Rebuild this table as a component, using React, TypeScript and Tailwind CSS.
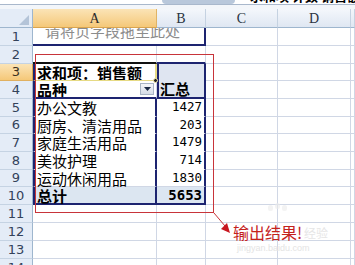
import React from "react";

const cjk = { fontFamily: '"Noto Sans CJK SC", "Liberation Sans", sans-serif' };
const mono = { fontFamily: '"DejaVu Sans Mono", "Liberation Mono", monospace' };

const rows = [
  { n: 1, h: "h-[18px]" },
  { n: 2, h: "h-[18px]" },
  { n: 3, h: "h-[17px]" },
  { n: 4, h: "h-[18px]" },
  { n: 5, h: "h-[18px]" },
  { n: 6, h: "h-[17px]" },
  { n: 7, h: "h-[18px]" },
  { n: 8, h: "h-[18px]" },
  { n: 9, h: "h-[17px]" },
  { n: 10, h: "h-[18px]" },
  { n: 11, h: "h-[18px]" },
  { n: 12, h: "h-[18px]" },
  { n: 13, h: "h-[18px]" },
  { n: 14, h: "h-[18px]" },
];

const data: Record<number, [string, string]> = {
  5: ["办公文教", "1427"],
  6: ["厨房、清洁用品", "203"],
  7: ["家庭生活用品", "1479"],
  8: ["美妆护理", "714"],
  9: ["运动休闲用品", "1830"],
};

const grid = "border-r border-b border-[#d0d7e5]";

const RowHead = ({ n }: { n: number }) => (
  <div
    className={
      "w-[33px] shrink-0 flex items-center justify-center border-r border-b text-[13px] " +
      (n === 3
        ? "bg-gradient-to-b from-[#fbe4b6] to-[#f5c878] border-r-[#d9a550] border-b-[#e0b060] text-[#3a3020]"
        : "bg-[#e4ecf7] border-r-[#9eb6ce] border-b-[#c5d3e3] text-[#33425a]")
    }
    style={{ fontFamily: '"DejaVu Sans", sans-serif' }}
  >
    {n}
  </div>
);

const CellsAB = ({ n }: { n: number }) => {
  if (n === 1) {
    return (
      <div className="w-[173px] shrink-0 overflow-hidden border-b-2 border-r-2 border-[#1d2470] bg-white">
        <div className="pl-[12px] -mt-[7px] text-[15px] leading-[20px] text-[#8c8c8c] whitespace-nowrap" style={cjk}>
          请将页字段拖至此处
        </div>
      </div>
    );
  }
  if (n === 2) {
    return (
      <>
        <div className="w-[124px] shrink-0 border-r border-b-2 border-r-[#d0d7e5] border-b-[#111111]" />
        <div className="w-[49px] shrink-0 border-r border-b-2 border-r-[#d0d7e5] border-b-[#1d2470]" />
      </>
    );
  }
  if (n === 3) {
    return (
      <>
        <div className="w-[124px] shrink-0 bg-white border-l-2 border-r-2 border-b border-l-[#1d2470] border-r-[#e6da84] border-b-[#e6da84] flex items-center pl-[2px] overflow-hidden">
          <span className="text-[15px] font-bold text-black whitespace-nowrap leading-none" style={cjk}>
            求和项：销售额
          </span>
        </div>
        <div className="w-[49px] shrink-0 bg-[#dfe5f1] border-l-2 border-r-2 border-[#1d2470]" />
      </>
    );
  }
  if (n === 4) {
    return (
      <>
        <div className="w-[124px] shrink-0 bg-white border-l-2 border-b-2 border-r border-l-[#1d2470] border-b-[#1d2470] border-r-[#d0d7e5] flex items-center pl-[2px] pr-[2px] overflow-hidden">
          <span className="text-[15px] font-bold text-black leading-none" style={cjk}>
            品种
          </span>
          <div className="ml-auto w-[14px] h-[12px] border border-[#a8b4c4] bg-gradient-to-b from-[#f4f6f9] to-[#d6dde7] flex items-center justify-center">
            <svg width="7" height="4" viewBox="0 0 7 4">
              <polygon points="0,0 7,0 3.5,4" fill="#1b2a44" />
            </svg>
          </div>
        </div>
        <div className="w-[49px] shrink-0 bg-[#dfe5f1] border-l-2 border-r-2 border-b-2 border-[#1d2470] flex items-end pl-[1px] overflow-hidden">
          <span className="text-[15px] font-bold text-black leading-[16px]" style={cjk}>
            汇总
          </span>
        </div>
      </>
    );
  }
  if (n >= 5 && n <= 9) {
    const [label, val] = data[n];
    return (
      <>
        <div
          className={
            "w-[124px] shrink-0 bg-white border-l-2 border-r-2 border-b border-l-[#1d2470] border-r-[#1d2470] flex items-center pl-[2px] " +
            (n === 9 ? "border-b-[#d0d7e5]" : "border-b-white")
          }
        >
          <span className="text-[15px] text-black leading-none whitespace-nowrap" style={cjk}>
            {label}
          </span>
        </div>
        <div
          className={
            "w-[49px] shrink-0 bg-white border-r-2 border-b border-r-[#1d2470] flex items-center justify-end pr-[2px] " +
            (n === 9 ? "border-b-[#d0d7e5]" : "border-b-white")
          }
        >
          <span className="text-[12.5px] text-black leading-none" style={mono}>
            {val}
          </span>
        </div>
      </>
    );
  }
  if (n === 10) {
    return (
      <>
        <div className="w-[124px] shrink-0 bg-[#dce6f1] border-l-2 border-r-2 border-b-2 border-[#1d2470] flex items-center pl-[2px]">
          <span className="text-[15px] font-bold text-black leading-none" style={cjk}>
            总计
          </span>
        </div>
        <div className="w-[49px] shrink-0 bg-[#dce6f1] border-r-2 border-b-2 border-[#1d2470] flex items-center justify-end pr-[2px]">
          <span className="text-[14px] font-bold text-black leading-none" style={mono}>
            5653
          </span>
        </div>
      </>
    );
  }
  return (
    <>
      <div className={"w-[124px] shrink-0 " + grid} />
      <div className={"w-[49px] shrink-0 " + grid} />
    </>
  );
};

export default function App() {
  return (
    <div className="relative w-[355px] h-[265px] overflow-hidden bg-white">
      {/* formula bar remnant */}
      <div className="h-[9px] flex flex-col">
        <div className="relative h-[4px] bg-white overflow-hidden">
          <div className="absolute left-[162px] top-0 w-[73px] h-[4px] bg-[#b9c8db] rounded-b-[5px]" />
          <div className="absolute left-[250px] -top-[14px] text-[13px] font-bold text-black whitespace-nowrap" style={cjk}>
            求和项 计数 销售额
          </div>
        </div>
        <div className="h-px bg-[#a9b8cc]" />
        <div className="h-[4px] bg-[#f3f6fa]" />
      </div>

      {/* column headers */}
      <div className="flex h-[19px]" style={{ fontFamily: '"Liberation Serif", serif' }}>
        <div className="relative w-[33px] shrink-0 bg-[#e4ecf7] border-r border-b border-[#9eb6ce]">
          <svg className="absolute right-[3px] bottom-[2px]" width="10" height="10" viewBox="0 0 10 10">
            <polygon points="10,0 10,10 0,10" fill="#b4c4d8" />
          </svg>
        </div>
        <div className="w-[124px] shrink-0 bg-gradient-to-b from-[#fbe4b6] to-[#f5c878] border-r border-b border-r-[#e0b466] border-b-[#d9a550] flex items-center justify-center text-[14px] text-[#2b2b2b]">
          A
        </div>
        {[
          ["B", "w-[49px]"],
          ["C", "w-[72px]"],
          ["D", "w-[73px]"],
          ["", "flex-1"],
        ].map(([l, w]) => (
          <div
            key={w}
            className={
              w +
              " shrink-0 bg-gradient-to-b from-[#f4f7fb] to-[#dfe7f2] border-r border-b border-r-[#c5d2e1] border-b-[#9eb6ce] flex items-center justify-center text-[14px] text-[#2a3342]"
            }
          >
            {l}
          </div>
        ))}
      </div>

      {/* rows */}
      {rows.map((r) => (
        <div key={r.n} className={"flex " + r.h}>
          <RowHead n={r.n} />
          <CellsAB n={r.n} />
          <div className={"w-[72px] shrink-0 " + grid} />
          <div className={"w-[73px] shrink-0 " + grid} />
          <div className={"flex-1 " + grid} />
        </div>
      ))}

      {/* fill handle of active cell */}
      <div className="absolute left-[153px] top-[78px] w-[5px] h-[5px] bg-[#222] border border-[#f3ecb0] rounded-full" />

      {/* red annotation frame */}
      <div className="absolute left-[35px] top-[54px] w-[179px] h-[159px] border border-[#c8343a]" />

      {/* watermark */}
      <div className="absolute left-[268px] top-[205px] flex gap-[2px] opacity-60">
        <div className="w-[5px] h-[6px] rounded-full bg-[#ececec]" />
        <div className="w-[5px] h-[6px] rounded-full bg-[#ececec] -mt-[2px]" />
        <div className="w-[5px] h-[6px] rounded-full bg-[#ececec]" />
      </div>
      <div className="absolute left-[304px] top-[224px] text-[12px] text-[#e6e6e6]" style={cjk}>
        经验
      </div>
      <div className="absolute left-[237px] top-[243px] text-[9px] leading-[10px] text-[#e4e4e4]" style={{ fontFamily: '"Liberation Sans", sans-serif' }}>
        jingyan.baidu.com
      </div>

      {/* arrow + label */}
      <svg className="absolute left-0 top-0" width="355" height="265" viewBox="0 0 355 265">
        <line x1="214" y1="213" x2="225" y2="226" stroke="#c8343a" strokeWidth="1" />
        <polygon points="230,233 227,223 221,229" fill="#c8161e" />
      </svg>
      <div className="absolute left-[233px] top-[222px] text-[16px] leading-[20px] text-[#c4221c] whitespace-nowrap" style={cjk}>
        输出结果!
      </div>
    </div>
  );
}
